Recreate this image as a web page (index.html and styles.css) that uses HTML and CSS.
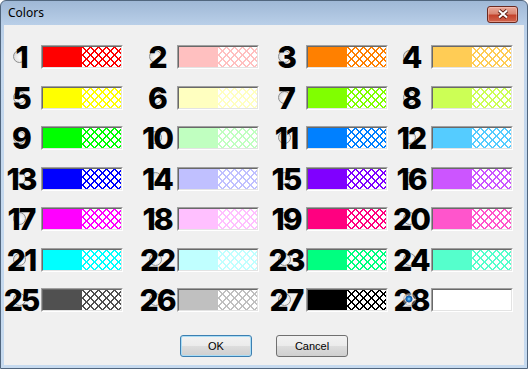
FILE: index.html
```html
<!DOCTYPE html>
<html>
<head>
<meta charset="utf-8">
<title>Colors</title>
<link rel="stylesheet" href="styles.css">
</head>
<body>
<div class="window">
  <div class="titlebar">
    <span class="title">Colors</span>
    <button class="close" aria-label="Close">
      <svg width="12" height="10" viewBox="0 0 12 10"><path d="M2 1.5L10 8.5M10 1.5L2 8.5" stroke="#5a1a10" stroke-width="3.8"/><path d="M2 1.5L10 8.5M10 1.5L2 8.5" stroke="#fff" stroke-width="2.1"/></svg>
    </button>
  </div>
  <div class="client">
    <div class="grid">
      <div class="cell"><span class="num"><span class="radio"></span><span class="digits">1</span></span><span class="swatch c1"><span class="well"><span class="solid"></span><span class="hatch"></span></span></span></div>
      <div class="cell"><span class="num"><span class="radio"></span><span class="digits">2</span></span><span class="swatch c2"><span class="well"><span class="solid"></span><span class="hatch"></span></span></span></div>
      <div class="cell"><span class="num"><span class="radio"></span><span class="digits">3</span></span><span class="swatch c3"><span class="well"><span class="solid"></span><span class="hatch"></span></span></span></div>
      <div class="cell"><span class="num"><span class="radio"></span><span class="digits">4</span></span><span class="swatch c4"><span class="well"><span class="solid"></span><span class="hatch"></span></span></span></div>
      <div class="cell"><span class="num"><span class="radio"></span><span class="digits">5</span></span><span class="swatch c5"><span class="well"><span class="solid"></span><span class="hatch"></span></span></span></div>
      <div class="cell"><span class="num"><span class="radio"></span><span class="digits">6</span></span><span class="swatch c6"><span class="well"><span class="solid"></span><span class="hatch"></span></span></span></div>
      <div class="cell"><span class="num"><span class="radio"></span><span class="digits">7</span></span><span class="swatch c7"><span class="well"><span class="solid"></span><span class="hatch"></span></span></span></div>
      <div class="cell"><span class="num"><span class="radio"></span><span class="digits">8</span></span><span class="swatch c8"><span class="well"><span class="solid"></span><span class="hatch"></span></span></span></div>
      <div class="cell"><span class="num"><span class="radio"></span><span class="digits">9</span></span><span class="swatch c9"><span class="well"><span class="solid"></span><span class="hatch"></span></span></span></div>
      <div class="cell"><span class="num"><span class="radio"></span><span class="digits">10</span></span><span class="swatch c10"><span class="well"><span class="solid"></span><span class="hatch"></span></span></span></div>
      <div class="cell"><span class="num"><span class="radio"></span><span class="digits">11</span></span><span class="swatch c11"><span class="well"><span class="solid"></span><span class="hatch"></span></span></span></div>
      <div class="cell"><span class="num"><span class="radio"></span><span class="digits">12</span></span><span class="swatch c12"><span class="well"><span class="solid"></span><span class="hatch"></span></span></span></div>
      <div class="cell"><span class="num"><span class="radio"></span><span class="digits">13</span></span><span class="swatch c13"><span class="well"><span class="solid"></span><span class="hatch"></span></span></span></div>
      <div class="cell"><span class="num"><span class="radio"></span><span class="digits">14</span></span><span class="swatch c14"><span class="well"><span class="solid"></span><span class="hatch"></span></span></span></div>
      <div class="cell"><span class="num"><span class="radio"></span><span class="digits">15</span></span><span class="swatch c15"><span class="well"><span class="solid"></span><span class="hatch"></span></span></span></div>
      <div class="cell"><span class="num"><span class="radio"></span><span class="digits">16</span></span><span class="swatch c16"><span class="well"><span class="solid"></span><span class="hatch"></span></span></span></div>
      <div class="cell"><span class="num"><span class="radio"></span><span class="digits">17</span></span><span class="swatch c17"><span class="well"><span class="solid"></span><span class="hatch"></span></span></span></div>
      <div class="cell"><span class="num"><span class="radio"></span><span class="digits">18</span></span><span class="swatch c18"><span class="well"><span class="solid"></span><span class="hatch"></span></span></span></div>
      <div class="cell"><span class="num"><span class="radio"></span><span class="digits">19</span></span><span class="swatch c19"><span class="well"><span class="solid"></span><span class="hatch"></span></span></span></div>
      <div class="cell"><span class="num"><span class="radio"></span><span class="digits">20</span></span><span class="swatch c20"><span class="well"><span class="solid"></span><span class="hatch"></span></span></span></div>
      <div class="cell"><span class="num"><span class="radio"></span><span class="digits">21</span></span><span class="swatch c21"><span class="well"><span class="solid"></span><span class="hatch"></span></span></span></div>
      <div class="cell"><span class="num"><span class="radio"></span><span class="digits">22</span></span><span class="swatch c22"><span class="well"><span class="solid"></span><span class="hatch"></span></span></span></div>
      <div class="cell"><span class="num"><span class="radio"></span><span class="digits">23</span></span><span class="swatch c23"><span class="well"><span class="solid"></span><span class="hatch"></span></span></span></div>
      <div class="cell"><span class="num"><span class="radio"></span><span class="digits">24</span></span><span class="swatch c24"><span class="well"><span class="solid"></span><span class="hatch"></span></span></span></div>
      <div class="cell"><span class="num"><span class="radio"></span><span class="digits">25</span></span><span class="swatch c25"><span class="well"><span class="solid"></span><span class="hatch"></span></span></span></div>
      <div class="cell"><span class="num"><span class="radio"></span><span class="digits">26</span></span><span class="swatch c26"><span class="well"><span class="solid"></span><span class="hatch"></span></span></span></div>
      <div class="cell"><span class="num"><span class="radio"></span><span class="digits">27</span></span><span class="swatch c27"><span class="well"><span class="solid"></span><span class="hatch"></span></span></span></div>
      <div class="cell"><span class="num"><span class="radio checked"></span><span class="digits">28</span></span><span class="swatch c28"><span class="well"><span class="solid"></span><span class="hatch"></span></span></span></div>
    </div>
    <div class="buttons">
      <button class="btn default">OK</button>
      <button class="btn">Cancel</button>
    </div>
  </div>
</div>
</body>
</html>
```
FILE: styles.css
```css
* { box-sizing: border-box; }
html, body { margin: 0; padding: 0; }
body {
  width: 528px;
  height: 369px;
  overflow: hidden;
  background: #ffffff;
  font-family: "Liberation Sans", Arial, sans-serif;
}
.window {
  width: 528px;
  height: 369px;
  border: 1px solid #51667e;
  border-radius: 6px 6px 0 0;
  background: linear-gradient(to bottom, #9fb8d6 0, #b9cfe8 24px, #c3d7ed 60px, #c6daef 100%);
  display: flex;
  flex-direction: column;
  padding: 0 3px 3px 3px;
}
.titlebar {
  height: 24px;
  flex: none;
  display: flex;
  align-items: center;
  justify-content: space-between;
  padding: 0 6px 0 4px;
}
.title {
  font: 12px/1 "Noto Sans", "Open Sans", sans-serif;
  color: #000;
  margin-top: -1px;
}
.close {
  width: 31px;
  height: 17px;
  margin-top: 2px;
  padding: 0;
  border: 1px solid #6b2a20;
  border-radius: 3px;
  background: linear-gradient(to bottom, #e9a99a 0, #d98672 45%, #c4432c 55%, #d0654e 100%);
  box-shadow: inset 0 0 0 1px rgba(255, 210, 200, 0.45);
  display: flex;
  align-items: center;
  justify-content: center;
}
.client {
  flex: 1;
  background: #f0f0f0;
  display: flex;
  flex-direction: column;
}
.grid {
  display: grid;
  grid-template-columns: 136px 129px 125px 119px;
  grid-template-rows: repeat(7, 24px);
  row-gap: 16.5px;
  padding-top: 20px;
}
.cell {
  display: flex;
  align-items: center;
  gap: 5px;
}
.num {
  position: relative;
  width: 32px;
  height: 24px;
  flex: none;
  display: flex;
  align-items: center;
  justify-content: center;
  white-space: nowrap;
}
.digits {
  position: relative;
  z-index: 1;
  font: 800 30px/1 Inter, "DejaVu Sans", sans-serif;
  letter-spacing: -2px;
  margin-right: -2px;
  color: #000;
}
.radio {
  position: absolute;
  left: 50%;
  top: 50%;
  width: 13px;
  height: 13px;
  margin: -7px 0 0 -7px;
  border-radius: 50%;
  border: 1px solid #8e8f8f;
  background: radial-gradient(circle at 60% 60%, #ffffff 0, #e6e6e6 55%, #c8c8c8 100%);
  z-index: 0;
}
.radio.checked {
  z-index: 2;
  border-color: rgba(142, 143, 143, 0.5);
  background: radial-gradient(circle at 45% 45%, #a8e4ff 0, #2a90dc 1.4px, #0b4f9e 3.2px, rgba(220, 220, 220, 0.9) 3.8px, rgba(235, 235, 235, 0.35) 5px, rgba(240, 240, 240, 0) 100%);
}
.swatch {
  width: 82px;
  height: 24px;
  flex: none;
  border: 1px solid;
  border-color: #a0a0a0 #ffffff #ffffff #a0a0a0;
}
.well {
  display: flex;
  width: 100%;
  height: 100%;
  border: 1px solid;
  border-color: #696969 #e3e3e3 #e3e3e3 #696969;
}
.solid {
  width: 39px;
  flex: none;
  background: var(--c);
}
.hatch {
  flex: 1;
  position: relative;
  background: #ffffff;
}
.hatch::before {
  content: "";
  position: absolute;
  inset: 0;
  background: var(--c);
  -webkit-mask-image: url("data:image/svg+xml,%3Csvg xmlns='http://www.w3.org/2000/svg' width='8' height='8' shape-rendering='crispEdges'%3E%3Cpath d='M0 0h2v1H0zM7 0h1v1H7zM1 1h2v1H1zM6 1h2v1H6zM2 2h2v1H2zM5 2h2v1H5zM3 3h3v1H3zM3 4h3v1H3zM2 5h2v1H2zM5 5h2v1H5zM1 6h2v1H1zM6 6h2v1H6zM0 7h2v1H0zM7 7h1v1H7z'/%3E%3C/svg%3E");
  mask-image: url("data:image/svg+xml,%3Csvg xmlns='http://www.w3.org/2000/svg' width='8' height='8' shape-rendering='crispEdges'%3E%3Cpath d='M0 0h2v1H0zM7 0h1v1H7zM1 1h2v1H1zM6 1h2v1H6zM2 2h2v1H2zM5 2h2v1H5zM3 3h3v1H3zM3 4h3v1H3zM2 5h2v1H2zM5 5h2v1H5zM1 6h2v1H1zM6 6h2v1H6zM0 7h2v1H0zM7 7h1v1H7z'/%3E%3C/svg%3E");
  -webkit-mask-size: 8px 8px;
  mask-size: 8px 8px;
}
.c1 { --c: #ff0000; }
.c2 { --c: #ffc0c0; }
.c3 { --c: #ff8000; }
.c4 { --c: #ffcc55; }
.c5 { --c: #ffff00; }
.c6 { --c: #ffffc0; }
.c7 { --c: #80ff00; }
.c8 { --c: #ccff55; }
.c9 { --c: #00ff00; }
.c10 { --c: #c0ffc0; }
.c11 { --c: #0080ff; }
.c12 { --c: #55ccff; }
.c13 { --c: #0000ff; }
.c14 { --c: #c0c0ff; }
.c15 { --c: #8000ff; }
.c16 { --c: #cc55ff; }
.c17 { --c: #ff00ff; }
.c18 { --c: #ffc0ff; }
.c19 { --c: #ff0080; }
.c20 { --c: #ff55cc; }
.c21 { --c: #00ffff; }
.c22 { --c: #c0ffff; }
.c23 { --c: #00ff80; }
.c24 { --c: #55ffcc; }
.c25 { --c: #505050; }
.c26 { --c: #c0c0c0; }
.c27 { --c: #000000; }
.c28 { --c: #ffffff; }
.buttons {
  display: flex;
  justify-content: center;
  gap: 24px;
  margin-top: 23px;
}
.btn {
  width: 72px;
  height: 22px;
  padding: 0;
  border: 1px solid #707070;
  border-radius: 3px;
  background: linear-gradient(to bottom, #f2f2f2 0, #ebebeb 50%, #dddddd 50%, #cfcfcf 100%);
  font: 11px/1 "Liberation Sans", Arial, sans-serif;
  color: #000;
}
.btn.default {
  border-color: #3c7fb1;
  box-shadow: inset 0 0 0 1px #a9dcf5;
}
```
